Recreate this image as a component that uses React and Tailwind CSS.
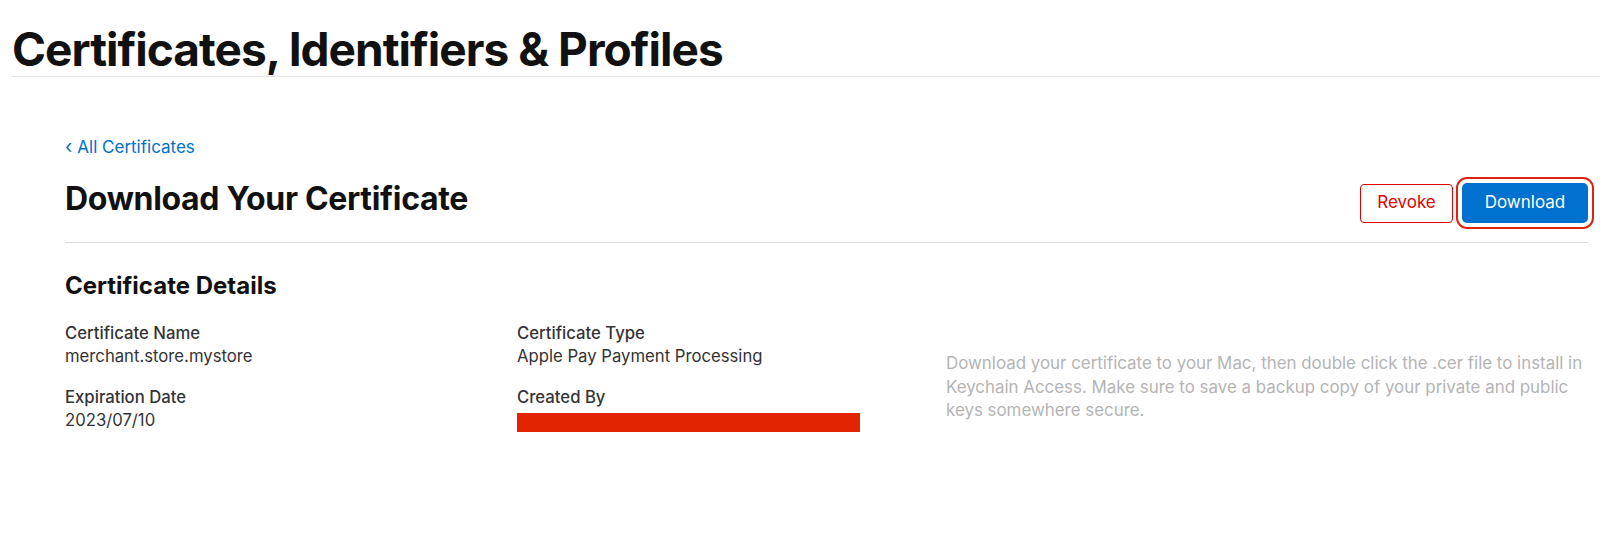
import React from "react";

const font = { fontFamily: "Inter, 'Noto Sans', sans-serif" };

const DetailItem = ({ label, children }) => (
  <div className="mb-[18px]">
    <div className="text-[16.7px] leading-[23px] font-medium text-[#333336]">{label}</div>
    <div className="text-[16.7px] leading-[23px] text-[#333336]">{children}</div>
  </div>
);

const App = () => {
  return (
    <div className="w-[1600px] h-[536px] bg-white overflow-hidden" style={font}>
      <header className="pl-[12px] pt-[22px]">
        <h1 className="text-[46px] leading-[54px] font-bold tracking-[-0.021em] text-[#111111]">
          Certificates, Identifiers &amp; Profiles
        </h1>
        <div className="border-b border-[#e3e3e3]" />
      </header>

      <main className="pl-[65px] pr-[12px] pt-[59px]">
        <a href="#" className="flex items-center gap-[5px] text-[17px] leading-[22px] text-[#0070c9]">
          <span className="text-[19px] leading-[22px]">‹</span>
          <span>All Certificates</span>
        </a>

        <div className="flex items-center justify-between mt-[21px] pb-[15px] border-b border-[#dcdcdc]">
          <h2 className="pb-[8px] text-[32px] leading-[40px] font-bold tracking-[-0.01em] text-[#111111]">
            Download Your Certificate
          </h2>
          <div className="flex items-center gap-[9px]">
            <button className="h-[39px] w-[93px] rounded-[4px] border border-[#e30000] text-[17px] text-[#e30000] bg-white">
              Revoke
            </button>
            <button className="h-[40px] w-[126px] rounded-[5px] bg-[#0071ce] text-[17px] text-white outline-2 outline-[#dd2412] outline-offset-[4px]">
              Download
            </button>
          </div>
        </div>

        <h3 className="mt-[27px] text-[24px] leading-[32px] font-bold text-[#111111]">
          Certificate Details
        </h3>

        <div className="flex mt-[20px]">
          <div className="w-[452px]">
            <DetailItem label="Certificate Name">merchant.store.mystore</DetailItem>
            <DetailItem label="Expiration Date">2023/07/10</DetailItem>
          </div>
          <div className="w-[429px]">
            <DetailItem label="Certificate Type">Apple Pay Payment Processing</DetailItem>
            <DetailItem label="Created By">
              <div className="mt-[4px] h-[19px] w-[343px] bg-[#e32400]" />
            </DetailItem>
          </div>
          <p className="flex-1 pt-[30px] text-[16.9px] leading-[23.5px] text-[#b4b4b4]">
            Download your certificate to your Mac, then double click the .cer file to install in
            Keychain Access. Make sure to save a backup copy of your private and public keys
            somewhere secure.
          </p>
        </div>
      </main>
    </div>
  );
};

export default App;
